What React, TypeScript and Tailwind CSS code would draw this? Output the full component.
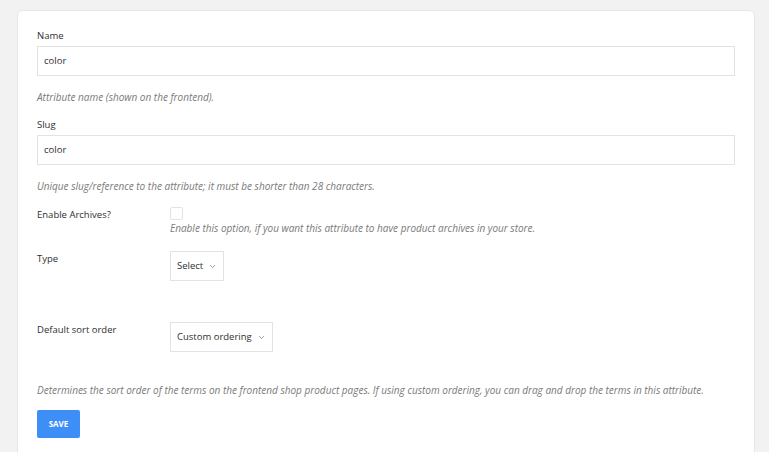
import React from "react";

const Chevron = () => (
  <svg width="7" height="7" viewBox="0 0 10 10" className="ml-[6px]" fill="none">
    <path d="M2 3.5 L5 6.5 L8 3.5" stroke="#888" strokeWidth="1.2" strokeLinecap="round" strokeLinejoin="round" />
  </svg>
);

export default function App() {
  return (
    <div className="min-h-[452px] bg-[#f1f2f1] pt-[10px] pl-[17px] pr-[14px] overflow-hidden" style={{ fontFamily: '"Open Sans", sans-serif' }}>
      <div className="h-[460px] bg-white rounded-[6px] border border-[#e6e8e6] pt-[18px] pl-[19px] pr-[19px] text-[#2f2f2f]">
        <div className="text-[9.5px] leading-[14px]">Name</div>
        <div className="mt-[3px] h-[30px] border border-[#e3e3e3] flex items-center px-[6px] text-[9.5px]">color</div>
        <div className="mt-[15px] text-[10px] leading-[13px] italic text-[#7a7a7a]">Attribute name (shown on the frontend).</div>
        <div className="mt-[14px] text-[9.5px] leading-[14px]">Slug</div>
        <div className="mt-[3px] h-[30px] border border-[#e3e3e3] flex items-center px-[6px] text-[9.5px]">color</div>
        <div className="mt-[15px] text-[10px] leading-[13px] italic text-[#7a7a7a]">Unique slug/reference to the attribute; it must be shorter than 28 characters.</div>

        <div className="mt-[14px] flex">
          <div className="w-[133px] text-[9.5px] leading-[14px] pt-[1px]">Enable Archives?</div>
          <div>
            <div className="w-[13px] h-[13px] border border-[#e3e3e3] rounded-[2px]" />
            <div className="mt-[2px] text-[10px] leading-[13px] italic text-[#7a7a7a]">Enable this option, if you want this attribute to have product archives in your store.</div>
          </div>
        </div>

        <div className="mt-[16px] flex">
          <div className="w-[133px] text-[9.5px] leading-[14px] pt-[1px]">Type</div>
          <div className="h-[30px] border border-[#e3e3e3] flex items-center pl-[6px] pr-[7px] text-[9.5px]">
            Select
            <Chevron />
          </div>
        </div>

        <div className="mt-[41px] flex">
          <div className="w-[133px] text-[9.5px] leading-[14px] pt-[1px]">Default sort order</div>
          <div className="h-[30px] border border-[#e3e3e3] flex items-center pl-[6px] pr-[7px] text-[9.5px]">
            Custom ordering
            <Chevron />
          </div>
        </div>

        <div className="mt-[32px] text-[10px] leading-[13px] italic text-[#7a7a7a]">Determines the sort order of the terms on the frontend shop product pages. If using custom ordering, you can drag and drop the terms in this attribute.</div>

        <div className="mt-[13px] w-[43px] h-[28px] rounded-[2px] bg-[#3d8ef7] text-white text-[8px] font-bold flex items-center justify-center">SAVE</div>
      </div>
    </div>
  );
}
